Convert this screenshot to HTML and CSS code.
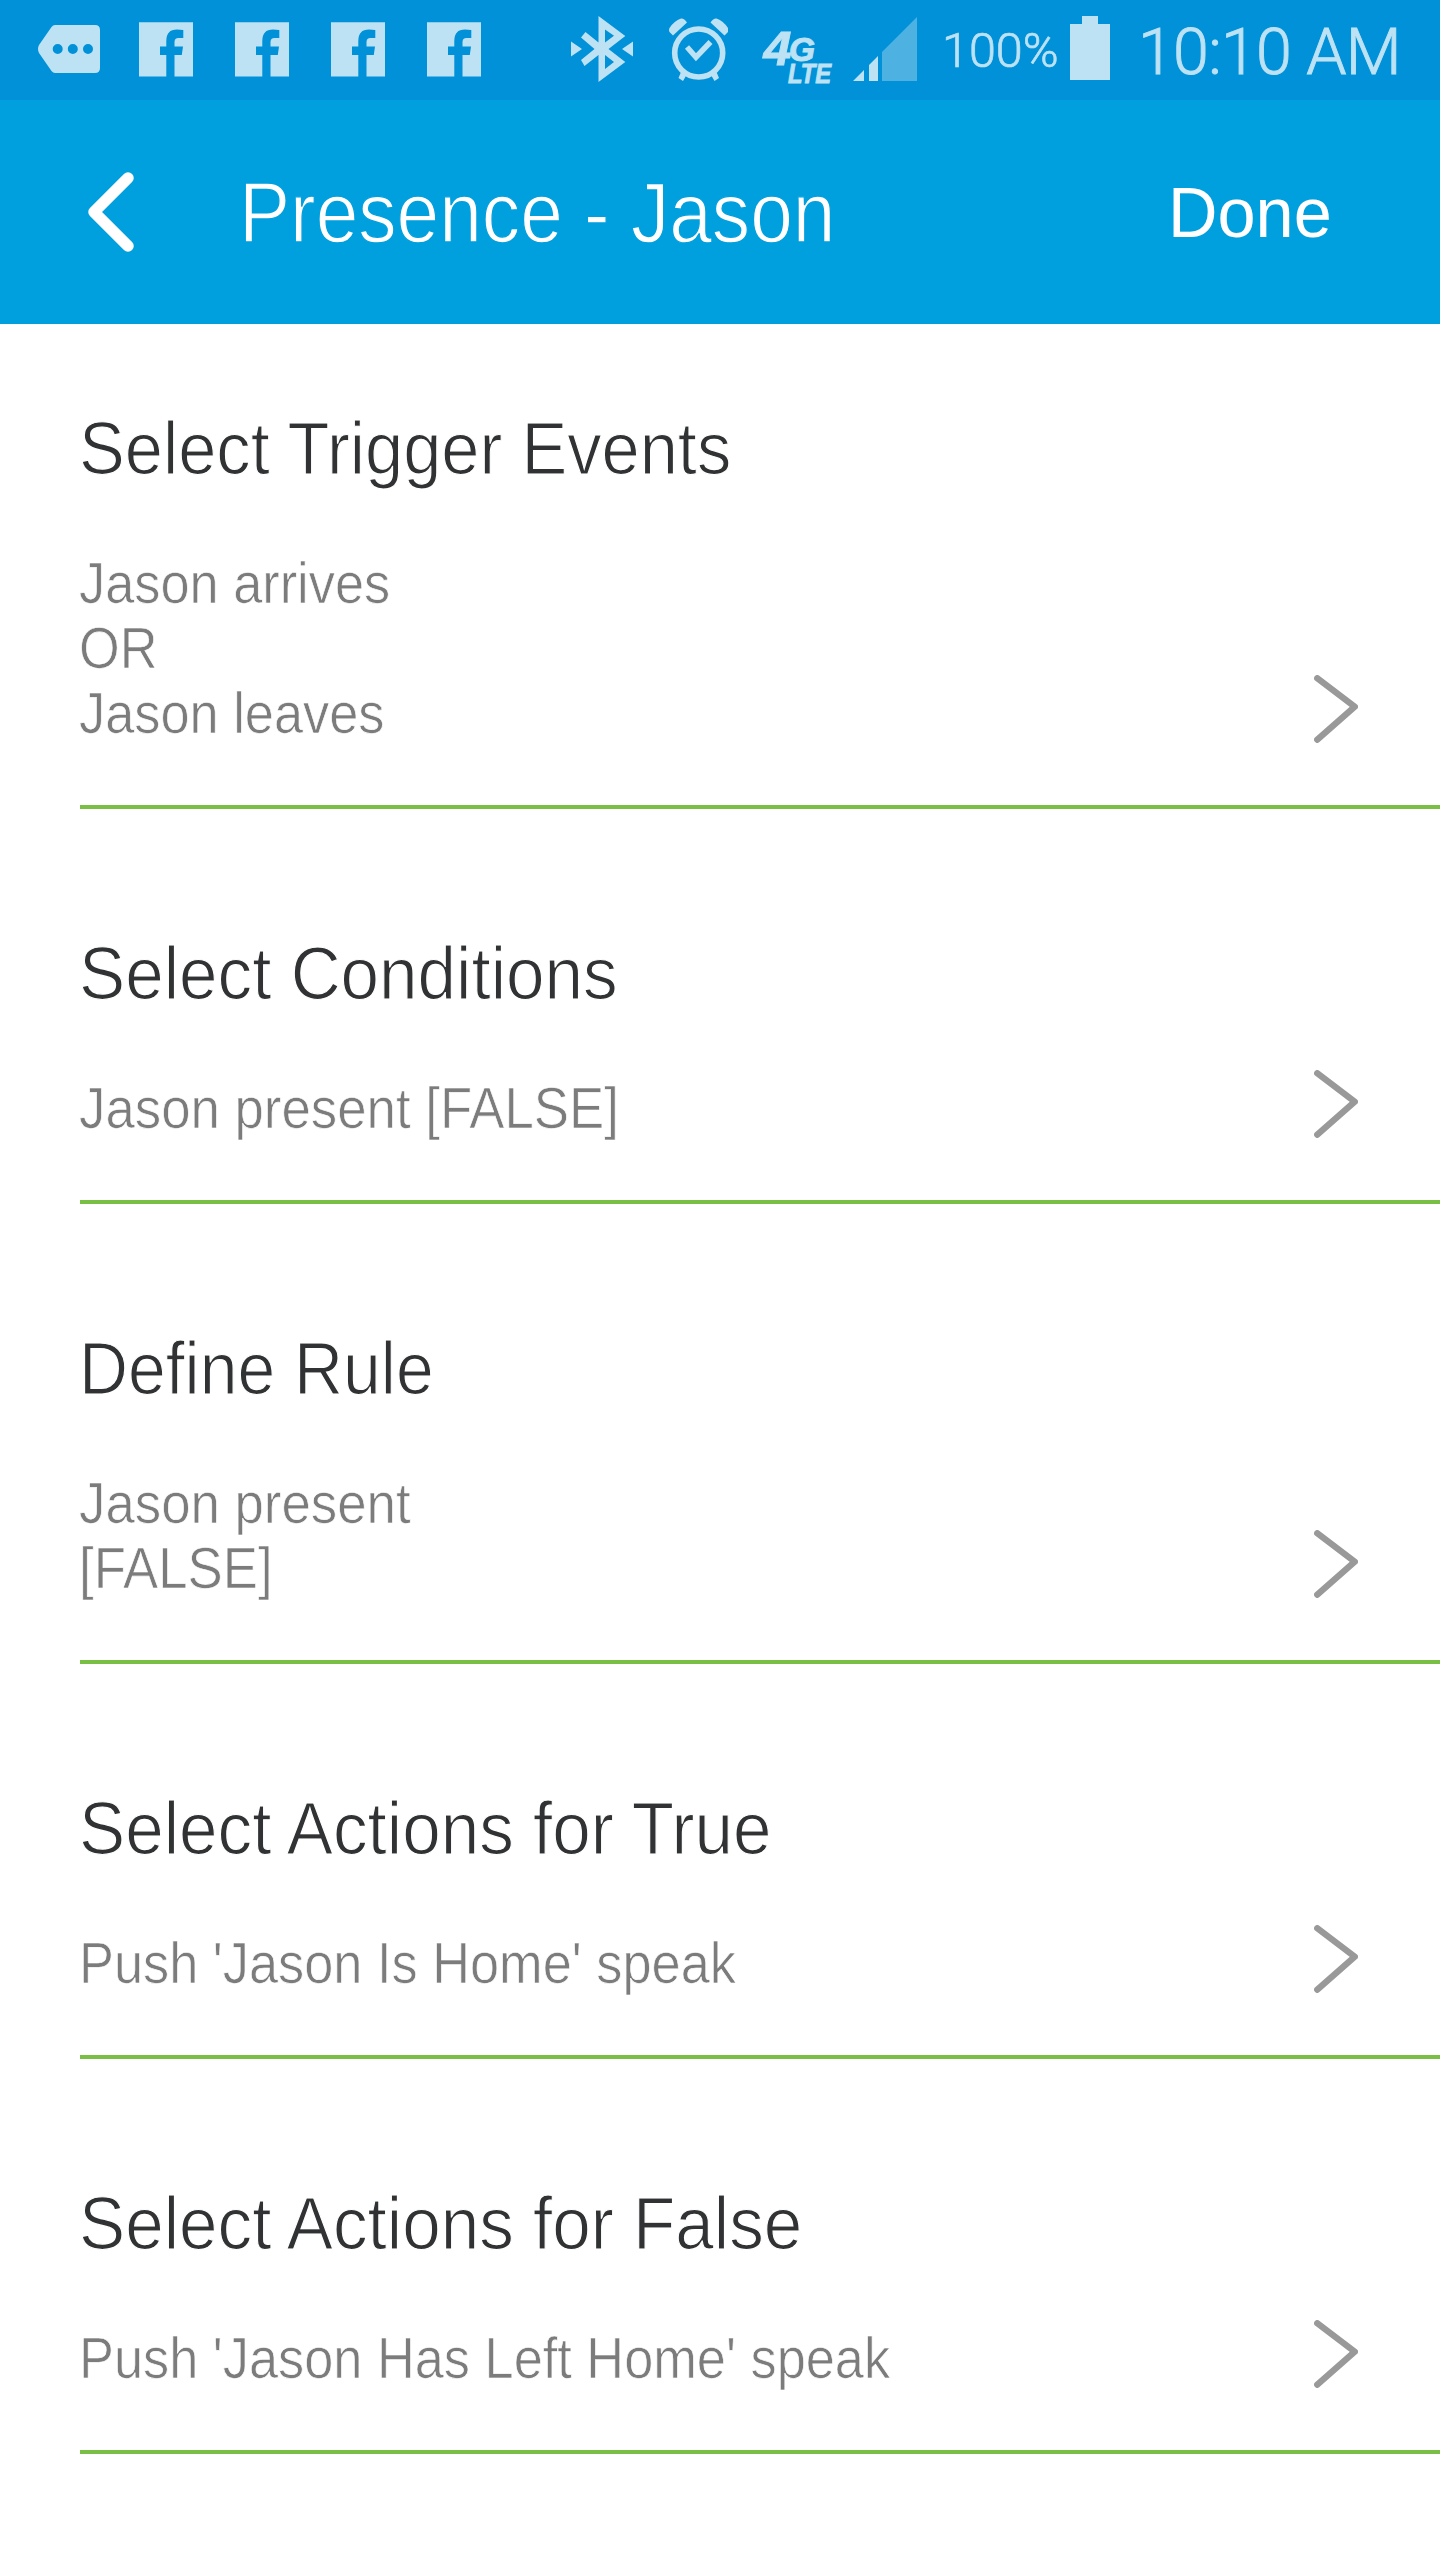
FILE: index.html
```html
<!DOCTYPE html>
<html lang="en">
<head>
<meta charset="utf-8">
<title>Presence - Jason</title>
<link rel="stylesheet" href="styles.css">
</head>
<body>
<svg class="defs" width="0" height="0" aria-hidden="true">
  <symbol id="fb" viewBox="139 0 54 100">
    <path d="M139 22.3H193V76.6H174.5V55H181.8L183 46.5H174.5V42Q174.5 38 178.500 38H183.300V30Q180 29.500 177 29.500Q166.300 29.500 166.300 41V46.500H160V55H166.300V76.600H139Z"/>
  </symbol>
  <symbol id="chevron" viewBox="0 0 44 68">
    <path d="M3.300 3.300L40.800 31.700L3.300 64.700" fill="none" stroke="#999" stroke-width="6.400" stroke-linecap="round" stroke-linejoin="round"/>
  </symbol>
</svg>

<div class="status">
  <svg class="tag" viewBox="38 0 62 100"><path fill-rule="evenodd" d="M55 25H95Q100 25 100 30V68Q100 73 95 73H55Q53 73 51.500 71L39 53Q37 49 39 45L51.500 27Q53 25 55 25ZM52.700 49a5 5 0 1 0 10 0a5 5 0 1 0-10 0M67.800 49a5 5 0 1 0 10 0a5 5 0 1 0-10 0M83 49a5 5 0 1 0 10 0a5 5 0 1 0-10 0"/></svg>
  <div class="apps">
    <svg class="fb"><use href="#fb"/></svg>
    <svg class="fb"><use href="#fb"/></svg>
    <svg class="fb"><use href="#fb"/></svg>
    <svg class="fb"><use href="#fb"/></svg>
  </div>
  <svg class="bluetooth" viewBox="571 0 62 100">
    <path d="M571 41.500L582 49L571 56.500ZM633 41.500L622 49L633 56.500Z"/>
    <path fill-rule="evenodd" d="M598.500 16L625.300 36L608.500 49L625.300 62L598.500 82V55L584.500 66L581 60L594.500 49L581 37.500L585.500 32L598.500 42.500ZM605 29.500V42.500L614 35.800ZM605 55V69L614 62Z"/>
  </svg>
  <svg class="alarm" viewBox="669 0 59 100">
    <circle cx="698.700" cy="53" r="24" fill="none" stroke="#bce2f4" stroke-width="5.600"/>
    <path d="M673 35.500L669.500 32Q668.500 30 669.500 28Q674 21 681 18.500Q684 18 687 22.500ZM724.500 35.500L728 32Q729 30 728 28Q723.500 21 716.500 18.500Q713.500 18 710.500 22.500ZM681 72L686.500 75L683 81L678.500 78ZM716.500 72L711 75L714.500 81L719 78Z"/>
    <path d="M687 47L696 57.200L710.500 42" fill="none" stroke="#bce2f4" stroke-width="5.500"/>
  </svg>
  <svg class="lte" viewBox="763 0 69 100">
    <text><tspan x="763.500" y="64.500" font-size="49" textLength="28" lengthAdjust="spacingAndGlyphs">4</tspan><tspan x="789" y="60.500" font-size="33" textLength="26" lengthAdjust="spacingAndGlyphs">G</tspan><tspan x="788" y="82.500" font-size="28" textLength="43" lengthAdjust="spacingAndGlyphs">LTE</tspan></text>
  </svg>
  <svg class="signal" viewBox="853 0 64 100">
    <path d="M853 81L864 70V81ZM869 81V65L878 56V81Z"/>
    <path fill="#4db1e2" d="M882 81V52L917 17V81Z"/>
  </svg>
  <span class="percent">100%</span>
  <svg class="battery" viewBox="1070 0 40 100"><path d="M1082 16H1098V24H1110V80H1070V24H1082Z"/></svg>
  <span class="clock">10:10 AM</span>
</div>

<header class="bar">
  <svg class="back" viewBox="0 0 46 80"><path d="M40 6L6 40L40 74" fill="none" stroke="#fff" stroke-width="11.500" stroke-linecap="round" stroke-linejoin="round"/></svg>
  <h1 class="title">Presence - Jason</h1>
  <span class="done">Done</span>
</header>

<main>
  <section class="item">
    <h2 class="heading snug">Select Trigger Events</h2>
    <div class="row">
      <p class="detail">Jason arrives<br>OR<br>Jason leaves</p>
      <svg class="chevron"><use href="#chevron"/></svg>
    </div>
  </section>
  <section class="item">
    <h2 class="heading">Select Conditions</h2>
    <div class="row">
      <p class="detail wide">Jason present [FALSE]</p>
      <svg class="chevron"><use href="#chevron"/></svg>
    </div>
  </section>
  <section class="item">
    <h2 class="heading tight">Define Rule</h2>
    <div class="row">
      <p class="detail wide">Jason present<br>[FALSE]</p>
      <svg class="chevron"><use href="#chevron"/></svg>
    </div>
  </section>
  <section class="item">
    <h2 class="heading">Select Actions for True</h2>
    <div class="row">
      <p class="detail">Push 'Jason Is Home' speak</p>
      <svg class="chevron"><use href="#chevron"/></svg>
    </div>
  </section>
  <section class="item">
    <h2 class="heading">Select Actions for False</h2>
    <div class="row">
      <p class="detail">Push 'Jason Has Left Home' speak</p>
      <svg class="chevron"><use href="#chevron"/></svg>
    </div>
  </section>
</main>
</body>
</html>
```
FILE: styles.css
```css
* { box-sizing: border-box; }

body {
  margin: 0;
  min-height: 2560px;
  background: #fff;
  font-family: "Liberation Sans", Arial, sans-serif;
  overflow-x: hidden;
}

h1, h2, p { margin: 0; font-weight: 400; }
.defs { display: block; position: absolute; }

/* System status bar */
.status {
  display: flex;
  height: 100px;
  padding-left: 38px;
  background: #0091d8;
  color: #bce2f4;
  fill: #bce2f4;
  font-family: Roboto, sans-serif;
  font-weight: 300;
  white-space: nowrap;
}
.status svg { display: block; flex: none; height: 100px; }
.tag { width: 62px; }
.apps { display: flex; gap: 42px; margin-left: 39px; }
.fb { width: 54px; }
.bluetooth { width: 62px; margin-left: 90px; }
.alarm { width: 59px; margin-left: 36px; }
.lte {
  width: 69px;
  margin-left: 35px;
  overflow: visible;
  font-family: "Liberation Sans", sans-serif;
  font-weight: 700;
  font-style: italic;
  stroke: #bce2f4;
  stroke-width: 1px;
}
.signal { width: 64px; margin-left: 21px; }
.percent {
  width: 128px;
  margin-left: 25px;
  font-size: 48.500px;
  line-height: 101px;
  -webkit-text-stroke: .7px #bce2f4;
}
.battery { width: 40px; }
.clock {
  margin-left: 28px;
  font-size: 64.500px;
  line-height: 104px;
  letter-spacing: -.7px;
  -webkit-text-stroke: .9px #bce2f4;
}

/* Navigation bar */
.bar {
  display: flex;
  align-items: center;
  height: 224px;
  padding: 0 108px 0 88px;
  background: #00a0de;
  color: #fff;
}
.back { width: 46px; height: 80px; flex: none; }
.title {
  margin-left: 105px;
  padding-top: 2px;
  font-size: 84.500px;
  line-height: 112px;
  white-space: nowrap;
  -webkit-text-stroke: 1.400px #00a0de;
  transform: scaleX(.907);
  transform-origin: left;
}
.done {
  margin-left: auto;
  font-size: 71px;
  transform: scaleX(.965);
  transform-origin: right;
}

/* Rule sections */
.item {
  margin-left: 80px;
  padding: 120px 82px 60px 0;
  border-bottom: 4px solid #79bf45;
}
.item:first-child { padding-top: 80px; }
.heading {
  margin-left: -1px;
  font-size: 75px;
  line-height: 88px;
  color: #303233;
  white-space: nowrap;
  -webkit-text-stroke: 1.200px #fff;
  transform: scaleX(.923);
  transform-origin: left;
}
.heading.snug { transform: scaleX(.915); }
.heading.tight { transform: scaleX(.905); }
.row {
  display: flex;
  justify-content: space-between;
  align-items: flex-end;
  margin-top: 58px;
}
.detail {
  margin-left: -1px;
  font-size: 57px;
  line-height: 65px;
  color: #7c7c7c;
  white-space: nowrap;
  -webkit-text-stroke: .7px #fff;
  transform: translateY(1px) scaleX(.918);
  transform-origin: left;
}
.detail.wide { transform: translateY(1px) scaleX(.926); }
.chevron { width: 44px; height: 68px; flex: none; margin: -10px 0 2px; }
```
